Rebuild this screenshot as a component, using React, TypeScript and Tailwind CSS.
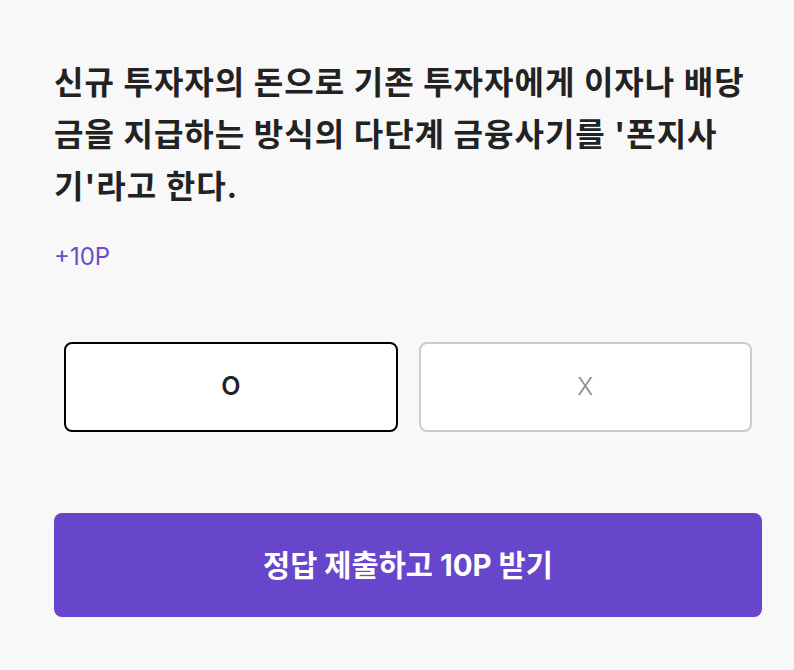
import React from "react";

export default function App() {
  return (
    <div
      className="w-[794px] h-[670px] bg-[#f8f8f8] pl-[54px] pr-[32px] pt-[57px]"
      style={{ fontFamily: 'Inter, "Noto Sans CJK KR", "Noto Sans", sans-serif' }}
    >
      <h1 className="text-[32px] font-bold leading-[52px] tracking-[1px] text-[#222] break-all">
        신규 투자자의 돈으로 기존 투자자에게 이자나 배당금을 지급하는 방식의 다단계 금융사기를 '폰지사기'라고 한다.
      </h1>
      <div className="mt-[28px] text-[24px] leading-[32px] text-[#6a4bd0]">+10P</div>
      <div className="mt-[69px] px-[10px] flex gap-[21px]">
        <button className="flex-1 h-[90px] bg-white border-2 border-black rounded-[8px] text-[25px] font-semibold text-[#222] flex items-center justify-center">
          O
        </button>
        <button className="flex-1 h-[90px] bg-white border-2 border-[#cccccc] rounded-[8px] text-[24px] font-light text-[#888] flex items-center justify-center">
          X
        </button>
      </div>
      <button className="mt-[81px] w-full h-[104px] bg-[#6746cc] rounded-[8px] text-white text-[29.5px] font-bold flex items-center justify-center">
        정답 제출하고 10P 받기
      </button>
    </div>
  );
}
